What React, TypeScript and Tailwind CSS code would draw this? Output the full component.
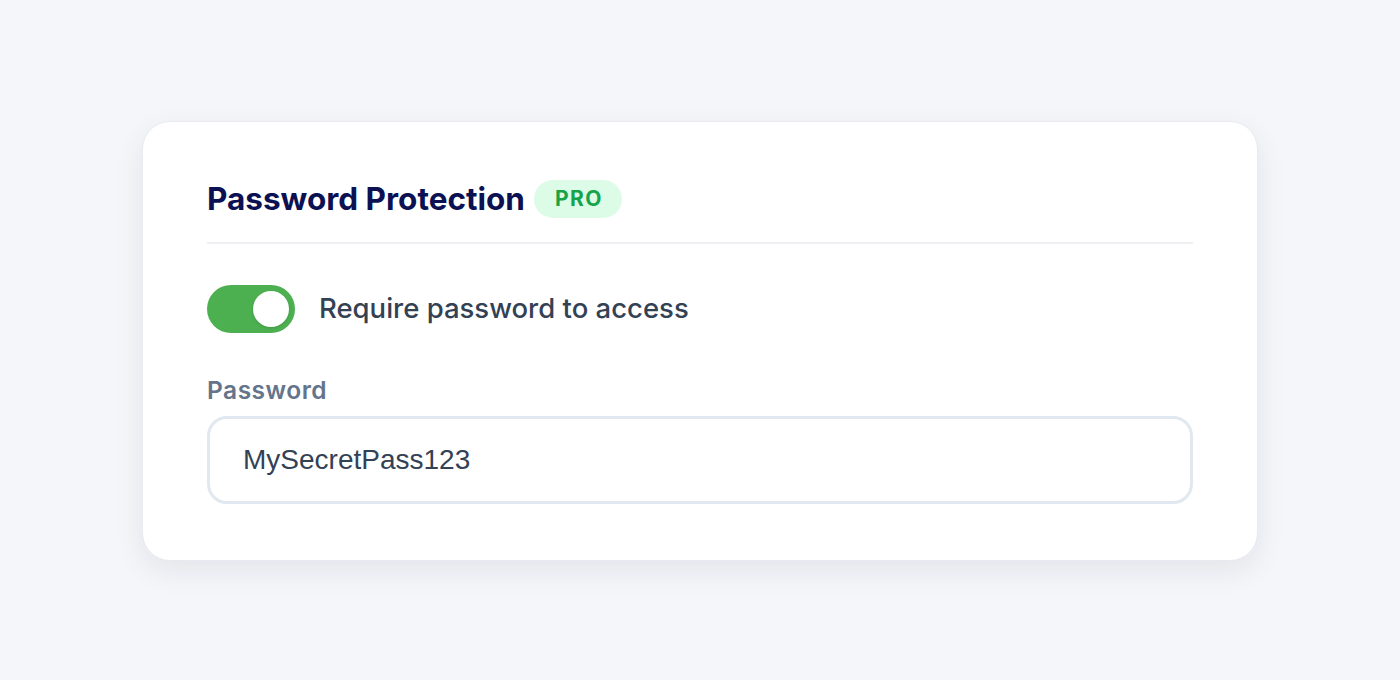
export default function App() {
  return (
    <div className="min-h-screen w-full bg-[#f5f6fa] pt-[121px] font-['Inter',sans-serif]">
      <div className="mx-auto w-[1116px] rounded-[28px] border border-[#e8eaef] bg-white px-16 pb-[56px] pt-[58px] shadow-[0_10px_30px_rgba(15,23,42,0.08)]">
        {/* Header */}
        <div className="flex h-[38px] items-center gap-[9px]">
          <h2 className="text-[31.5px] font-bold leading-none text-[#0b1152]">
            Password Protection
          </h2>
          <span className="flex h-[38px] items-center rounded-full bg-[#dcfce7] pl-[21px] pr-[19px] text-[21px] font-bold tracking-[1.5px] text-[#16a34a]">
            PRO
          </span>
        </div>

        <div className="mt-6 h-[2px] bg-[#eef0f3]" />

        {/* Toggle */}
        <div className="mt-[41px] flex items-center gap-6">
          <button
            type="button"
            className="relative h-[48px] w-[88px] rounded-full bg-[#4caf50]"
          >
            <span className="absolute right-[6px] top-[6px] size-[36px] rounded-full bg-white shadow-sm" />
          </button>
          <span className="text-[27.5px] font-medium text-[#334155]">
            Require password to access
          </span>
        </div>

        {/* Password */}
        <div className="mt-[41px]">
          <label className="block text-[24.5px] font-semibold leading-[32px] tracking-[0.5px] text-[#64748b]">
            Password
          </label>
          <input
            type="text"
            defaultValue="MySecretPass123"
            className="mt-[10px] h-[88px] w-full rounded-[20px] border-[3px] border-[#e2e8f0] bg-white px-[33px] font-['Liberation_Sans',Arial,sans-serif] text-[28px] text-[#334155] outline-none"
          />
        </div>
      </div>
    </div>
  );
}
